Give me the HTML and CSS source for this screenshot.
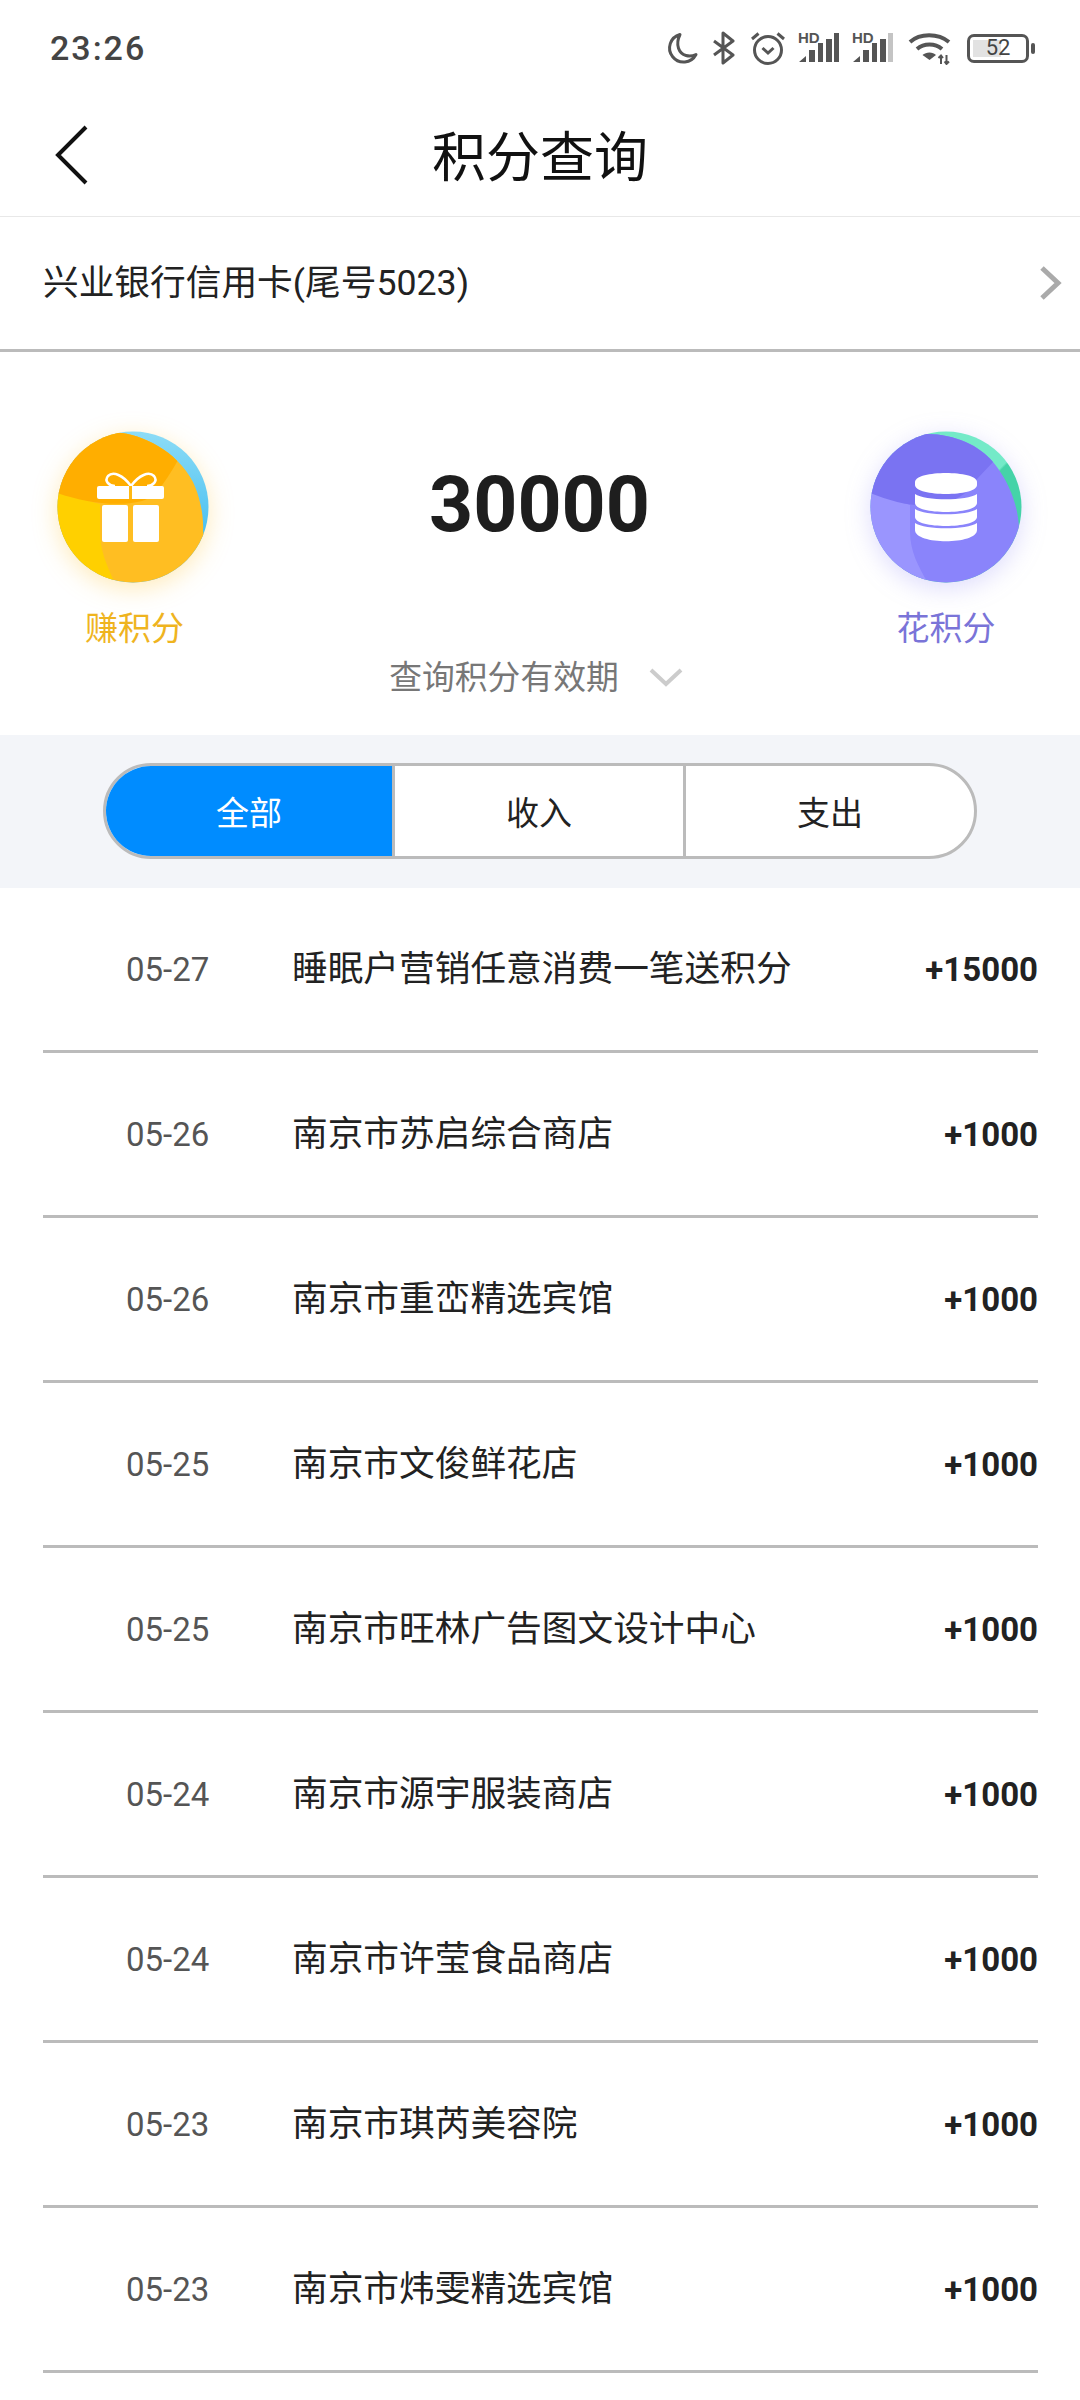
FILE: index.html
```html
<!DOCTYPE html>
<html lang="zh-CN">
<head>
  <meta charset="UTF-8">
  <meta name="viewport" content="width=device-width, initial-scale=1.0">
  <title>积分查询</title>
  <link rel="stylesheet" href="styles.css">
</head>
<body>
  <div class="status-bar">
    <div class="status-time">23:26</div>
    <div class="status-icons">
      <svg class="ic-moon" width="34" height="34" viewBox="0 0 34 34"><path d="M15 3.500A14 14 0 1 0 31 23.500C28 25 24.500 25.500 21 24.500C14 22.500 10 14 15 3.500Z" fill="none" stroke="#555" stroke-width="3" stroke-linejoin="round"/></svg>
      <svg class="ic-bt" width="24" height="34" viewBox="0 0 24 34"><path d="M2 10L21 24L11 32V2L21 10L2 24" fill="none" stroke="#555" stroke-width="3" stroke-linejoin="round"/></svg>
      <svg class="ic-alarm" width="36" height="34" viewBox="0 0 36 34"><circle cx="18" cy="19" r="13.500" fill="none" stroke="#555" stroke-width="3"/><path d="M12.500 17L18 22L23.500 17M2 8L8.500 2.500M34 8L27.500 2.500" fill="none" stroke="#555" stroke-width="3"/></svg>
      <div class="signal">
        <span class="signal-hd">HD</span>
        <svg width="42" height="30" viewBox="0 0 42 30"><path d="M1 29L8 23V29ZM11 17H17V29H11ZM20 10H25V29H20ZM28 6H34V29H28ZM36 0H41V29H36Z" fill="#555"/></svg>
      </div>
      <div class="signal">
        <span class="signal-hd">HD</span>
        <svg width="42" height="30" viewBox="0 0 42 30"><path d="M1 29L8 23V29ZM11 17H17V29H11ZM20 10H25V29H20ZM28 6H34V29H28Z" fill="#555"/><path d="M36 0H41V29H36Z" fill="#c4c4c4"/></svg>
      </div>
      <svg class="ic-wifi" width="44" height="34" viewBox="0 0 44 34"><path d="M2 11C12 2 30 2 41 11M9 18C16 12 27 12 34 18" fill="none" stroke="#555" stroke-width="4"/><path d="M14.500 24C18 20.500 25 20.500 28 24L21.500 29Z" fill="#555"/><path d="M33 25V33M38.500 24V33M30.500 27L33 24.500L35 27M36.500 30.500L38.500 33L41 30.500" fill="none" stroke="#555" stroke-width="2"/></svg>
      <div class="battery">
        <div class="battery-body"><span class="battery-fill"></span><span class="battery-num">52</span></div>
        <div class="battery-nub"></div>
      </div>
    </div>
  </div>

  <div class="nav-bar">
    <svg class="nav-back" width="36" height="60" viewBox="0 0 36 60"><path d="M32 2L4 30L32 58" fill="none" stroke="#111" stroke-width="4"/></svg>
    <h1>积分查询</h1>
  </div>

  <div class="card-row">
    <span class="card-name">兴业银行信用卡(尾号5023)</span>
    <svg width="24" height="36" viewBox="0 0 24 36"><path d="M4 3L20 18L4 33" fill="none" stroke="#aaa" stroke-width="5"/></svg>
  </div>

  <div class="summary">
    <div class="action action-earn">
      <svg class="action-icon" width="152" height="152" viewBox="0 0 152 152">
        <defs>
          <clipPath id="earnCircle"><circle cx="76" cy="76" r="75.500"/></clipPath>
          <clipPath id="earnLens"><path d="M60 1.500C85 3 120 20 136 51C143 66 147 85 146 100L160 160H-10V-10H60Z"/></clipPath>
          <linearGradient id="earnEdge" x1="0" y1="0" x2="0" y2="1"><stop offset="0" stop-color="#8ddcf6"/><stop offset="0.700" stop-color="#48bff0"/></linearGradient>
        </defs>
        <g clip-path="url(#earnCircle)">
          <rect width="152" height="152" fill="url(#earnEdge)"/>
          <g clip-path="url(#earnLens)">
            <rect width="152" height="152" fill="#ffbe22"/>
            <path d="M0 60L20 67L43 73V100C43 120 50 135 58 152H0Z" fill="#ffd000"/>
            <path d="M0 62C30 72 60 76 85 70C100 66 112 45 125 22L100 -5H0Z" fill="#ffae00"/>
          </g>
        </g>
        <path d="M74 55C66 44 56 40 51 45C47 50 52 55 58 55M74 55C82 44 92 40 97 45C101 50 96 55 90 55" fill="none" stroke="#fff" stroke-width="2.500"/>
        <rect x="40" y="55" width="67" height="13" rx="2" fill="#fff"/>
        <rect x="45" y="74" width="26" height="37" rx="2" fill="#fff"/>
        <rect x="76" y="74" width="26" height="37" rx="2" fill="#fff"/>
        <rect x="72" y="55" width="3" height="13" fill="#ffb914"/>
      </svg>
      <div class="action-label">赚积分</div>
    </div>

    <div class="summary-main">
      <div class="points">30000</div>
      <div class="expiry">
        <span>查询积分有效期</span>
        <svg width="34" height="20" viewBox="0 0 34 20"><path d="M2 2L17 16L32 2" fill="none" stroke="#ccc" stroke-width="4"/></svg>
      </div>
    </div>

    <div class="action action-spend">
      <svg class="action-icon" width="152" height="152" viewBox="0 0 152 152">
        <defs>
          <clipPath id="spendCircle"><circle cx="76" cy="76" r="75.500"/></clipPath>
          <clipPath id="spendLens"><path d="M57 3C85 3 110 15 123 31C135 45 148 70 149 96L160 160H-10V-10H57Z"/></clipPath>
          <linearGradient id="spendEdge" x1="0" y1="0" x2="1" y2="1"><stop offset="0.550" stop-color="#74eac8"/><stop offset="0.560" stop-color="#45d3a8"/></linearGradient>
        </defs>
        <g clip-path="url(#spendCircle)">
          <rect width="152" height="152" fill="url(#spendEdge)"/>
          <g clip-path="url(#spendLens)">
            <rect width="152" height="152" fill="#8a84fb"/>
            <path d="M0 60L20 68L40 74V100C40 120 48 135 58 152H0Z" fill="#9a95fe"/>
            <path d="M0 62C25 72 50 78 75 72C90 68 100 60 107 48L124 30L100 -5H0Z" fill="#7a73f2"/>
          </g>
        </g>
        <path d="M45 51C45 39 107 39 107 51V54C107 66 45 66 45 54Z" fill="#fff"/>
        <path d="M45 63C55 70 97 70 107 63V72C107 84 45 84 45 72Z" fill="#fff"/>
        <path d="M45 78C55 85 97 85 107 78V86C107 98 45 98 45 86Z" fill="#fff"/>
        <path d="M45 92C55 99 97 99 107 92V99C107 114 45 114 45 99Z" fill="#fff"/>
      </svg>
      <div class="action-label">花积分</div>
    </div>
  </div>

  <div class="filter-bar">
    <div class="tabs">
      <div class="tab active">全部</div>
      <div class="tab">收入</div>
      <div class="tab">支出</div>
    </div>
  </div>

  <div class="record-list">
    <div class="record"><span class="record-date">05-27</span><span class="record-name">睡眠户营销任意消费一笔送积分</span><span class="record-amount">+15000</span></div>
    <div class="record"><span class="record-date">05-26</span><span class="record-name">南京市苏启综合商店</span><span class="record-amount">+1000</span></div>
    <div class="record"><span class="record-date">05-26</span><span class="record-name">南京市重峦精选宾馆</span><span class="record-amount">+1000</span></div>
    <div class="record"><span class="record-date">05-25</span><span class="record-name">南京市文俊鲜花店</span><span class="record-amount">+1000</span></div>
    <div class="record"><span class="record-date">05-25</span><span class="record-name">南京市旺林广告图文设计中心</span><span class="record-amount">+1000</span></div>
    <div class="record"><span class="record-date">05-24</span><span class="record-name">南京市源宇服装商店</span><span class="record-amount">+1000</span></div>
    <div class="record"><span class="record-date">05-24</span><span class="record-name">南京市许莹食品商店</span><span class="record-amount">+1000</span></div>
    <div class="record"><span class="record-date">05-23</span><span class="record-name">南京市琪芮美容院</span><span class="record-amount">+1000</span></div>
    <div class="record"><span class="record-date">05-23</span><span class="record-name">南京市炜雯精选宾馆</span><span class="record-amount">+1000</span></div>
  </div>
</body>
</html>
```

FILE: styles.css
```css
* {
  margin: 0;
  padding: 0;
  box-sizing: border-box;
  font-family: Roboto, "Noto Sans CJK SC", sans-serif;
}
body {
  width: 1080px;
  height: 2400px;
  background-color: white;
  color: #222;
  overflow: hidden;
}
svg {
  display: block;
  flex-shrink: 0;
}

.status-bar {
  height: 96px;
  padding: 0 45px 0 50px;
  display: flex;
  justify-content: space-between;
  align-items: center;
}
.status-time {
  font-size: 34px;
  font-weight: 500;
  letter-spacing: 2px;
  color: #444;
}
.status-icons {
  display: flex;
  align-items: center;
}
.ic-moon { margin-right: 13px; }
.ic-bt { margin-right: 14px; }
.ic-alarm { margin-right: 12px; }
.ic-wifi { margin-left: 2px; margin-right: 15px; }
.signal {
  position: relative;
  width: 42px;
  height: 30px;
  margin-right: 12px;
}
.signal-hd {
  position: absolute;
  top: -2px;
  left: 0;
  font-family: "Liberation Sans", sans-serif;
  font-size: 15px;
  font-weight: bold;
  color: #555;
  line-height: 14px;
}
.battery {
  display: flex;
  align-items: center;
  gap: 2px;
}
.battery-body {
  position: relative;
  width: 62px;
  height: 29px;
  border: 3.5px solid #555;
  border-radius: 7px;
  text-align: center;
  font-size: 22px;
  line-height: 22px;
  color: #444;
}
.battery-fill {
  position: absolute;
  top: 3px;
  left: 3px;
  bottom: 3px;
  width: 28px;
  background-color: #e2e2e2;
}
.battery-num {
  position: relative;
}
.battery-nub {
  width: 4px;
  height: 11px;
  border-radius: 2px;
  background-color: #555;
}

.nav-bar {
  position: relative;
  height: 121px;
  border-bottom: 1px solid #e8e8e8;
  display: flex;
  justify-content: center;
  align-items: center;
}
.nav-bar h1 {
  padding-bottom: 5px;
  font-size: 54px;
  font-weight: 400;
  color: #111;
}
.nav-back {
  position: absolute;
  left: 54px;
  top: 29px;
}

.card-row {
  height: 135px;
  padding: 0 18px 0 43px;
  border-bottom: 3px solid #bbb;
  display: flex;
  justify-content: space-between;
  align-items: center;
  font-size: 35.7px;
}
.card-name {
  padding-bottom: 8px;
}

.summary {
  height: 383px;
  padding: 79px 58px 0 57px;
  display: flex;
  justify-content: space-between;
}
.action {
  width: 152px;
  text-align: center;
}
.action-icon {
  margin-bottom: 26px;
}
.action-earn .action-icon {
  filter: drop-shadow(0 6px 12px rgba(255, 190, 30, 0.3));
}
.action-spend .action-icon {
  filter: drop-shadow(0 6px 12px rgba(125, 115, 245, 0.25));
}
.action-label {
  font-size: 33px;
  line-height: 40px;
}
.action-earn .action-label {
  padding-left: 3px;
  color: #efb41f;
}
.action-spend .action-label { color: #7a74d8; }
.summary-main {
  flex: 1;
  text-align: center;
  padding-top: 34px;
}
.points {
  font-size: 77px;
  font-weight: bold;
  line-height: 80px;
  color: #1e1e1e;
}
.expiry {
  margin-top: 111px;
  padding-right: 7px;
  display: flex;
  justify-content: center;
  align-items: center;
  gap: 30px;
  font-size: 32.8px;
  line-height: 44px;
  color: #777;
}

.filter-bar {
  height: 153px;
  background-color: #f3f5f9;
  padding: 28px 103px 0;
}
.tabs {
  height: 96px;
  width: 874px;
  background-color: white;
  border: 3px solid #bbb;
  border-radius: 48px;
  overflow: hidden;
  display: flex;
}
.tab {
  flex: 1;
  display: flex;
  justify-content: center;
  align-items: center;
  font-size: 33px;
  color: #222;
  border-left: 3px solid #bbb;
}
.tab.active {
  flex: 0 0 286px;
  background-color: #008cff;
  color: white;
  border-left: none;
}

.record-list {
  padding: 0 42px 0 43px;
}
.record {
  height: 165px;
  border-bottom: 3px solid #bbb;
  display: flex;
  align-items: center;
}
.record-date {
  box-sizing: content-box;
  width: 166px;
  padding-left: 83px;
  font-size: 33px;
  color: #555;
}
.record-name {
  flex: 1;
  padding-bottom: 8px;
  font-size: 35.7px;
  color: #222;
}
.record-amount {
  font-size: 33px;
  font-weight: bold;
  color: #222;
}
```
